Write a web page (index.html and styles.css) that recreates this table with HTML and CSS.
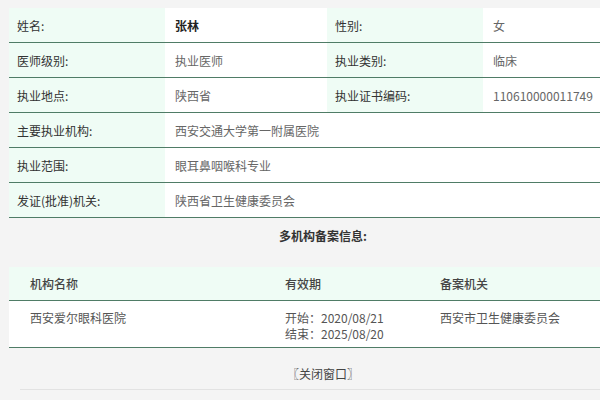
FILE: index.html
```html
<!DOCTYPE html>
<html lang="zh-CN">
<head>
<meta charset="utf-8">
<title>医师信息</title>
<link rel="stylesheet" href="styles.css">
</head>
<body>
<div class="page">
  <div class="info">
    <div class="row">
      <div class="lab">姓名:</div><div class="val strong">张林</div>
      <div class="lab">性别:</div><div class="val">女</div>
    </div>
    <div class="row">
      <div class="lab">医师级别:</div><div class="val">执业医师</div>
      <div class="lab">执业类别:</div><div class="val">临床</div>
    </div>
    <div class="row">
      <div class="lab">执业地点:</div><div class="val">陕西省</div>
      <div class="lab">执业证书编码:</div><div class="val">110610000011749</div>
    </div>
    <div class="row">
      <div class="lab">主要执业机构:</div><div class="val wide">西安交通大学第一附属医院</div>
    </div>
    <div class="row">
      <div class="lab">执业范围:</div><div class="val wide">眼耳鼻咽喉科专业</div>
    </div>
    <div class="row">
      <div class="lab">发证(批准)机关:</div><div class="val wide">陕西省卫生健康委员会</div>
    </div>
  </div>

  <div class="sec-title">多机构备案信息:</div>

  <div class="multi">
    <div class="mrow head">
      <div class="mc">机构名称</div>
      <div class="mc">有效期</div>
      <div class="mc">备案机关</div>
    </div>
    <div class="mrow body">
      <div class="mc">西安爱尔眼科医院</div>
      <div class="mc dates"><div>开始：2020/08/21</div><div>结束：2025/08/20</div></div>
      <div class="mc">西安市卫生健康委员会</div>
    </div>
  </div>

  <div class="close">〖关闭窗口〗</div>
  <div class="rule"></div>
</div>
</body>
</html>
```

FILE: styles.css
```css
html, body {
  margin: 0;
  padding: 0;
}
body {
  background: #f4f4f4;
  overflow: hidden;
  font-family: "Noto Sans CJK SC", "Noto Sans", sans-serif;
  font-size: 12px;
  color: #333;
}
.page {
  margin-left: 9px;
  width: 628px;
  padding-top: 8px;
}
.info {
  background: #fff;
}
.row {
  display: grid;
  grid-template-columns: 156px 162px 156px 154px;
  height: 34px;
  border-bottom: 1px solid #4f7c66;
}
.lab {
  background: #effcf5;
  padding-left: 8px;
  display: flex;
  align-items: center;
  color: #333;
}
.val {
  padding-left: 10px;
  display: flex;
  align-items: center;
  color: #666;
  background: #fff;
}
.val.wide {
  grid-column: 2 / 5;
}
.val.strong {
  font-weight: bold;
  color: #222;
}
.sec-title {
  height: 34px;
  display: flex;
  align-items: center;
  justify-content: center;
  font-weight: bold;
  color: #333;
  margin-bottom: 15px;
}
.multi {
  background: #fff;
}
.mrow {
  display: grid;
  grid-template-columns: 255px 155px 218px;
  border-bottom: 1px solid #4f7c66;
}
.mrow.head {
  background: #effcf5;
  height: 33px;
  align-items: center;
  font-weight: 500;
  color: #444;
}
.mrow.body {
  height: 47px;
  color: #555;
  align-items: start;
  padding-top: 9px;
  box-sizing: border-box;
  line-height: 16px;
}
.mc {
  padding-left: 21px;
}
.dates {
  display: flex;
  flex-direction: column;
  gap: 0;
}
.close {
  text-align: center;
  padding-top: 18px;
  height: 16px;
  line-height: 16px;
  color: #444;
}
.rule {
  margin: 7px 0 0 11px;
  border-top: 1px solid #e2e2e2;
}
```
